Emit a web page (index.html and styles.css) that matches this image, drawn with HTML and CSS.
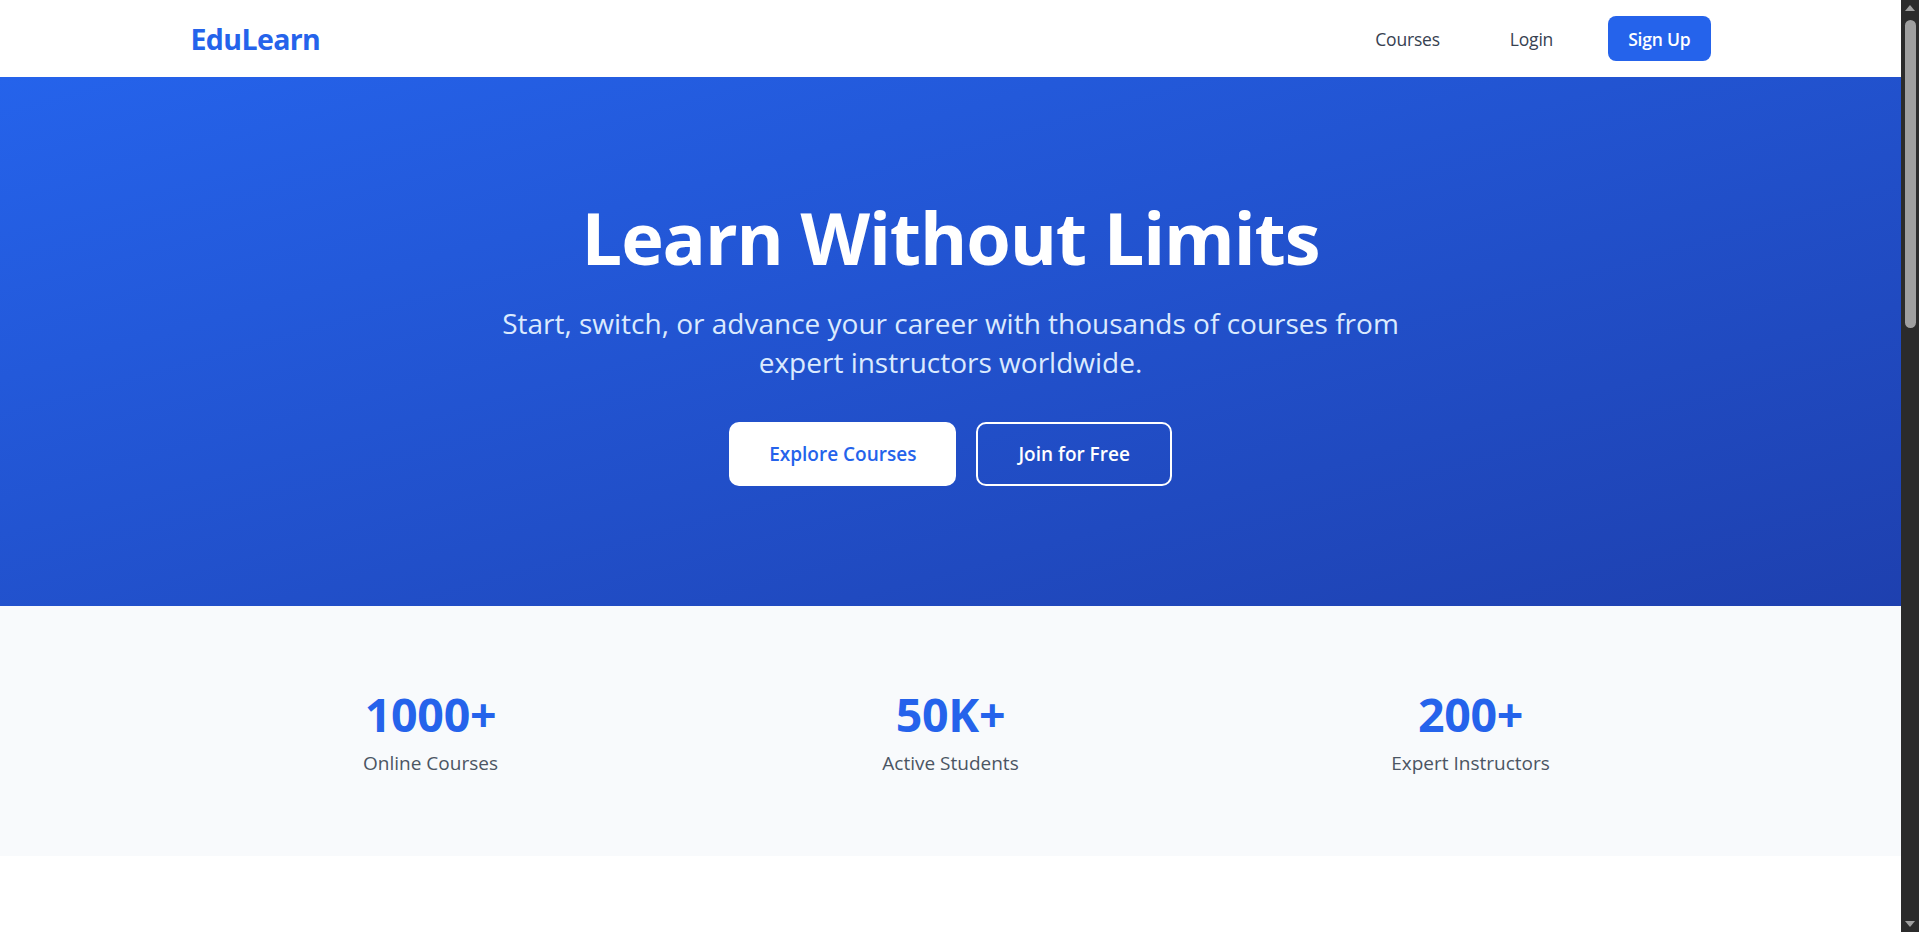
FILE: index.html
```html
<!DOCTYPE html>
<html lang="en">
<head>
<meta charset="utf-8">
<title>EduLearn</title>
<link rel="stylesheet" href="styles.css">
</head>
<body>
<header class="nav">
  <div class="container nav-inner">
    <a class="logo" href="#">EduLearn</a>
    <nav class="nav-links">
      <a class="nav-link" href="#">Courses</a>
      <a class="nav-link" href="#">Login</a>
      <a class="btn-signup" href="#">Sign Up</a>
    </nav>
  </div>
</header>

<section class="hero">
  <div class="container hero-inner">
    <h1 class="hero-title">Learn Without Limits</h1>
    <p class="hero-sub">Start, switch, or advance your career with thousands of courses from expert instructors worldwide.</p>
    <div class="hero-actions">
      <a class="btn btn-white" href="#">Explore Courses</a>
      <a class="btn btn-outline" href="#">Join for Free</a>
    </div>
  </div>
</section>

<section class="stats">
  <div class="container stats-grid">
    <div class="stat">
      <div class="stat-num">1000+</div>
      <div class="stat-label">Online Courses</div>
    </div>
    <div class="stat">
      <div class="stat-num">50K+</div>
      <div class="stat-label">Active Students</div>
    </div>
    <div class="stat">
      <div class="stat-num">200+</div>
      <div class="stat-label">Expert Instructors</div>
    </div>
  </div>
</section>

<section class="more"></section>

<div class="scrollbar" aria-hidden="true">
  <span class="sb-arrow sb-up"></span>
  <span class="sb-thumb"></span>
  <span class="sb-arrow sb-down"></span>
</div>
</body>
</html>
```
FILE: styles.css
```css
* { box-sizing: border-box; }

html { background: #ffffff; }

body {
  margin: 0;
  padding-right: 18px;
  font-family: "Open Sans", "Noto Sans", sans-serif;
  color: #1f2937;
  background: #ffffff;
}

a { text-decoration: none; }

/* imitation of the window's scrollbar */
.scrollbar {
  position: fixed;
  top: 0;
  right: 0;
  width: 18px;
  height: 100vh;
  background: #2b2b2b;
}
.sb-thumb {
  position: absolute;
  top: 20px;
  left: 4px;
  width: 11px;
  height: 308px;
  border-radius: 6px;
  background: #9f9f9f;
}
.sb-arrow {
  position: absolute;
  left: 4px;
  width: 10px;
  height: 6px;
  background: #9f9f9f;
}
.sb-up {
  top: 5px;
  clip-path: polygon(50% 0, 100% 100%, 0 100%);
}
.sb-down {
  bottom: 5px;
  clip-path: polygon(0 0, 100% 0, 50% 100%);
}

.container {
  max-width: 1600px;
  margin: 0 auto;
  padding: 0 40px;
}

/* Nav */
.nav {
  background: #ffffff;
  height: 77px;
}
.nav-inner {
  height: 100%;
  display: flex;
  align-items: center;
  justify-content: space-between;
}
.logo {
  font-size: 28.5px;
  font-weight: 700;
  color: #2563eb;
  letter-spacing: -0.6px;
}
.nav-links {
  display: flex;
  align-items: center;
  gap: 40px;
}
.nav-link {
  padding: 0 15px;
  font-size: 17.5px;
  font-weight: 500;
  color: #374151;
  letter-spacing: -0.2px;
}
.btn-signup {
  display: flex;
  align-items: center;
  height: 45px;
  padding: 0 20px;
  background: #2563eb;
  color: #ffffff;
  border-radius: 8px;
  font-size: 17.5px;
  font-weight: 600;
  letter-spacing: -0.2px;
}

/* Hero */
.hero {
  background: linear-gradient(to bottom right, #2563eb, #1e40af);
  color: #ffffff;
  height: 529px;
  padding-top: 115px;
}
.hero-inner {
  display: flex;
  flex-direction: column;
  align-items: center;
  text-align: center;
}
.hero-title {
  margin: 0;
  font-size: 72px;
  line-height: 90px;
  font-weight: 700;
  letter-spacing: -1.1px;
}
.hero-sub {
  margin: 22px 0 0;
  max-width: 960px;
  font-size: 28px;
  line-height: 39px;
  color: #dbeafe;
}
.hero-actions {
  margin-top: 40px;
  display: flex;
  gap: 20px;
}
.btn {
  display: flex;
  align-items: center;
  justify-content: center;
  height: 64px;
  padding: 0 40px;
  border-radius: 10px;
  font-size: 19px;
  font-weight: 600;
}
.btn-white {
  background: #ffffff;
  color: #2563eb;
}
.btn-outline {
  border: 2px solid #ffffff;
  color: #ffffff;
}

/* Stats */
.stats {
  background: #f8fafc;
  height: 250px;
  padding-top: 81px;
}
.stats-grid {
  display: grid;
  grid-template-columns: repeat(3, 1fr);
  gap: 40px;
}
.stat {
  text-align: center;
}
.stat-num {
  font-size: 46.5px;
  line-height: 54px;
  font-weight: 700;
  color: #2563eb;
  letter-spacing: -0.3px;
}
.stat-label {
  margin-top: 7px;
  font-size: 19px;
  line-height: 30px;
  color: #4b5563;
}

.more {
  height: 1850px;
  background: #ffffff;
}
```
